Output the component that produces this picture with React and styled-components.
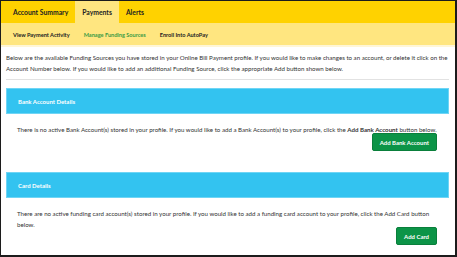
import React from "react";
import styled, { createGlobalStyle } from "styled-components";

const Global = createGlobalStyle`
  html, body { margin: 0; padding: 0; background: #fff; }
  body { font-family: Lato, "Open Sans", sans-serif; }
`;

const Frame = styled.div`
  box-sizing: border-box;
  width: 457px;
  height: 257px;
  border: 1px solid #1c1c1c;
  border-right-width: 2px;
  border-bottom-width: 2px;
  overflow: hidden;
  background: #fff;
`;

const Nav = styled.div`
  display: flex;
  height: 22px;
  padding-left: 5px;
  background: #ffd200;
`;

const Tab = styled.div`
  display: flex;
  align-items: center;
  padding: 0 7px;
  font-size: 6.8px;
  font-weight: 700;
  color: #222;
  background: ${(p) => (p.$active ? "#ffe680" : "transparent")};
`;

const SubNav = styled.div`
  display: flex;
  align-items: center;
  gap: 14px;
  height: 22px;
  padding-left: 12px;
  background: #ffe680;
  border-bottom: 2px solid #fff6d6;
`;

const SubItem = styled.div`
  font-size: 5.6px;
  font-weight: 700;
  color: ${(p) => (p.$active ? "#3a9b45" : "#222")};
`;

const Content = styled.div`
  padding: 5px 6px 0 5px;
`;

const Para = styled.p`
  margin: 0;
  font-size: 6.15px;
  line-height: 11px;
  color: #333;
`;

const Rule = styled.div`
  height: 1px;
  background: #e2e2e2;
  margin: 5px 0 8px;
`;

const Panel = styled.div`
  margin-bottom: ${(p) => p.$mb || 0}px;
`;

const PanelHead = styled.div`
  box-sizing: border-box;
  height: 26px;
  display: flex;
  align-items: center;
  padding-left: 11px;
  background: #33c3f0;
  border: 1px solid #6fd5f5;
  color: #fff;
  font-size: 6px;
  font-weight: 700;
`;

const PanelBody = styled.div`
  padding: 10px 11px 0 11px;
  display: flex;
  flex-direction: column;
`;

const BodyText = styled.p`
  margin: 0;
  font-size: 6.15px;
  line-height: 11px;
  color: #333;
`;

const Button = styled.button`
  align-self: flex-end;
  margin-right: 1px;
  margin-top: ${(p) => p.$mt || 0}px;
  height: 18px;
  padding: 0 ${(p) => p.$px || 7}px;
  border: 1px solid #0a7f3b;
  border-radius: 2px;
  background: #0c9447;
  color: #fff;
  font-family: Lato, "Open Sans", sans-serif;
  font-size: 6px;
  font-weight: 700;
  cursor: pointer;
`;

export default function App() {
  return (
    <>
      <Global />
      <Frame>
        <Nav>
          <Tab>Account Summary</Tab>
          <Tab $active>Payments</Tab>
          <Tab>Alerts</Tab>
        </Nav>
        <SubNav>
          <SubItem>View Payment Activity</SubItem>
          <SubItem $active>Manage Funding Sources</SubItem>
          <SubItem>Enroll Into AutoPay</SubItem>
        </SubNav>
        <Content>
          <Para>
            Below are the available Funding Sources you have stored in your Online Bill Payment profile. If you would
            like to make changes to an account, or delete it click on the Account Number below. If you would like to
            add an additional Funding Source, click the appropriate Add button shown below.
          </Para>
          <Rule />
          <Panel $mb={21}>
            <PanelHead>Bank Account Details</PanelHead>
            <PanelBody>
              <BodyText>
                There is no active Bank Account(s) stored in your profile. If you would like to add a Bank Account(s) to
                your profile, click the <b>Add Bank Account</b> button below.
              </BodyText>
              <Button $mt={-2}>Add Bank Account</Button>
            </PanelBody>
          </Panel>
          <Panel>
            <PanelHead>Card Details</PanelHead>
            <PanelBody>
              <BodyText>
                There are no active funding card account(s) stored in your profile. If you would like to add a funding
                card account to your profile, click the Add Card button below.
              </BodyText>
              <Button $mt={-3}>Add Card</Button>
            </PanelBody>
          </Panel>
        </Content>
      </Frame>
    </>
  );
}
